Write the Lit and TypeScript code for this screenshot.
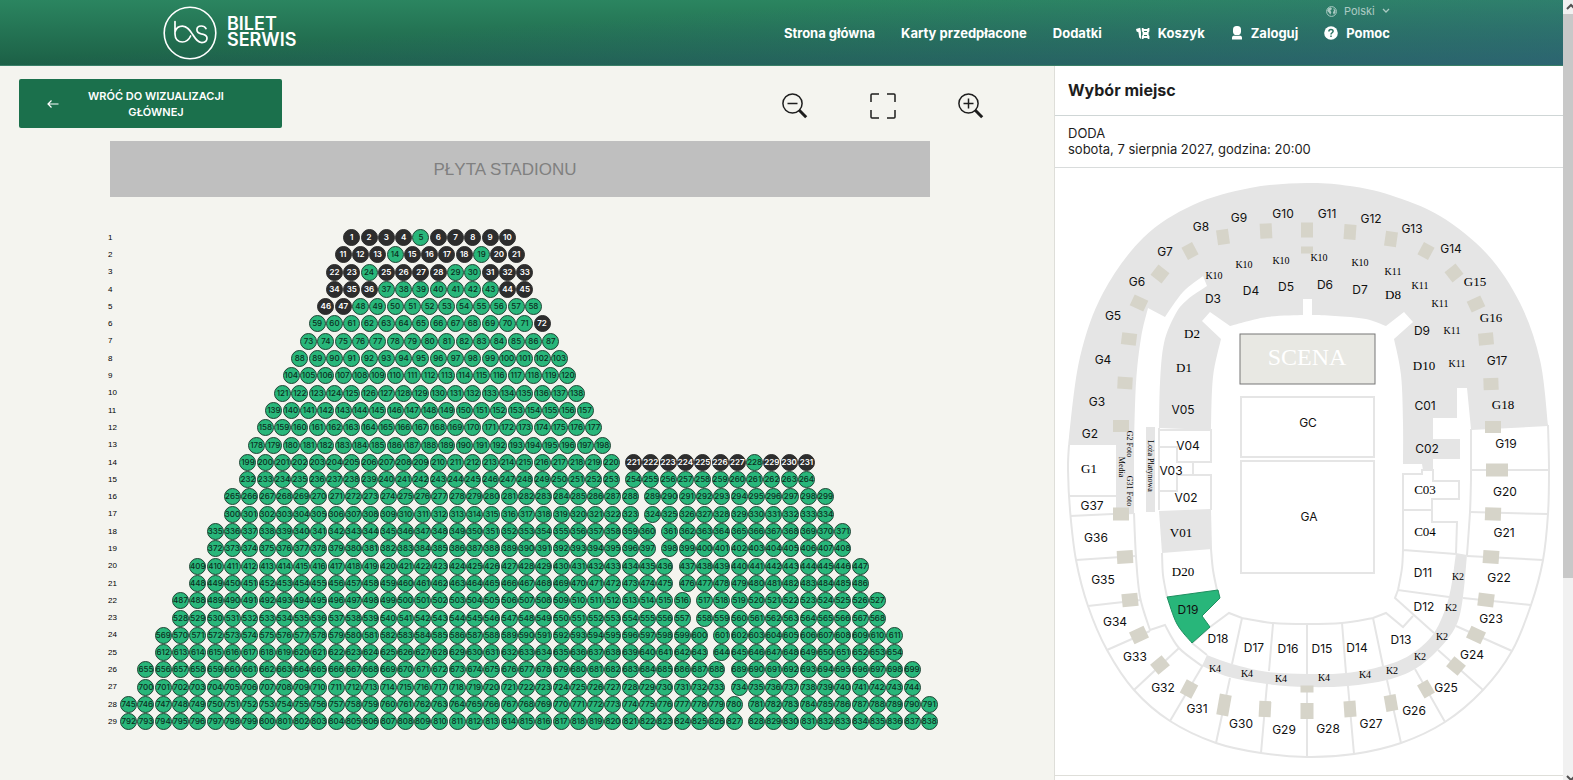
import { LitElement, html, svg, css } from "lit";
import { customElement } from "lit/decorators.js";
import { classMap } from "lit/directives/class-map.js";
import { styleMap } from "lit/directives/style-map.js";

type Point = [number, number];

/* Smooth open curve through the points, as the tail of a path (the pen is already at the first point). */
function curve(points: Point[]): string {
  let d = "";
  for (let i = 0; i < points.length - 1; i++) {
    const p0 = points[Math.max(i - 1, 0)];
    const p1 = points[i];
    const p2 = points[i + 1];
    const p3 = points[Math.min(i + 2, points.length - 1)];
    const c1 = [p1[0] + (p2[0] - p0[0]) / 6, p1[1] + (p2[1] - p0[1]) / 6];
    const c2 = [p2[0] - (p3[0] - p1[0]) / 6, p2[1] - (p3[1] - p1[1]) / 6];
    d += `C${c1[0].toFixed(1)} ${c1[1].toFixed(1)} ${c2[0].toFixed(1)} ${c2[1].toFixed(1)} ${p2[0]} ${p2[1]}`;
  }
  return d;
}
const move = (p: Point) => `M${p[0]} ${p[1]}`;
const line = (points: Point[]) => points.map((p) => `L${p[0]} ${p[1]}`).join("");

/* ---------- seat rows of sector D19 ---------- */

interface Row {
  start: number;
  left: number;
  right: number;
  indent: number;
}

const ROWS: Row[] = [
  { start: 1, left: 10, right: 0, indent: 12.9 },
  { start: 11, left: 11, right: 0, indent: 12.4 },
  { start: 22, left: 12, right: 0, indent: 11.9 },
  { start: 34, left: 12, right: 0, indent: 11.9 },
  { start: 46, left: 13, right: 0, indent: 11.4 },
  { start: 59, left: 14, right: 0, indent: 10.9 },
  { start: 73, left: 15, right: 0, indent: 10.4 },
  { start: 88, left: 16, right: 0, indent: 9.9 },
  { start: 104, left: 17, right: 0, indent: 9.4 },
  { start: 121, left: 18, right: 0, indent: 8.9 },
  { start: 139, left: 19, right: 0, indent: 8.4 },
  { start: 158, left: 20, right: 0, indent: 7.9 },
  { start: 178, left: 21, right: 0, indent: 7.4 },
  { start: 199, left: 22, right: 11, indent: 6.9 },
  { start: 232, left: 22, right: 11, indent: 6.9 },
  { start: 265, left: 24, right: 11, indent: 6 },
  { start: 300, left: 24, right: 11, indent: 6 },
  { start: 335, left: 26, right: 11, indent: 5 },
  { start: 372, left: 26, right: 11, indent: 5 },
  { start: 409, left: 28, right: 11, indent: 4 },
  { start: 448, left: 28, right: 11, indent: 4 },
  { start: 487, left: 30, right: 11, indent: 3 },
  { start: 528, left: 30, right: 11, indent: 3 },
  { start: 569, left: 32, right: 11, indent: 2 },
  { start: 612, left: 32, right: 11, indent: 2 },
  { start: 655, left: 34, right: 11, indent: 1 },
  { start: 700, left: 34, right: 11, indent: 1 },
  { start: 745, left: 36, right: 11, indent: 0 },
  { start: 792, left: 36, right: 11, indent: 0 },
];

const TAKEN = new Set([
  1, 2, 3, 4, 6, 7, 8, 9, 10, 11, 12, 13, 15, 16, 17, 18, 20, 21, 22, 23, 25, 26, 27, 28, 31, 32, 33, 34, 35, 36, 44,
  45, 46, 47, 72, 221, 222, 223, 224, 225, 226, 227, 229, 230, 231,
]);

@customElement("seat-map")
class SeatMap extends LitElement {
  static styles = css`
    :host {
      display: block;
      font-family: "Liberation Sans", Arial, sans-serif;
    }
    .field {
      box-sizing: border-box;
      height: 56px;
      margin: 0 124px 32px 110px;
      padding: 2px 30px 0 0;
      background: #bfbfbf;
      color: #808080;
      font-size: 17px;
      display: flex;
      align-items: center;
      justify-content: center;
    }
    .board {
      margin: 0 116px 0 104px;
      display: grid;
      grid-template-columns: 16px 1fr;
    }
    .rows {
      container-type: inline-size;
    }
    .labels {
      display: grid;
      grid-auto-rows: 1fr;
    }
    .label {
      display: flex;
      align-items: center;
      padding-left: 4px;
      font-size: 8px;
      line-height: 14px;
      color: #000;
    }
    .row {
      --pitch: calc((100cqw - 5px) / 47);
      display: flex;
      height: var(--pitch);
      gap: 5px;
      padding-left: calc(var(--pitch) * var(--indent));
    }
    .group {
      display: grid;
      grid-template-columns: repeat(var(--count), var(--pitch));
    }
    .seat {
      box-sizing: border-box;
      justify-self: center;
      width: 17px;
      height: 17px;
      padding: 0;
      border: 1px solid #1f4434;
      border-radius: 50%;
      background: #28b67a;
      color: #0c2e20;
      font: 500 8px/15px Inter, sans-serif;
      display: flex;
      align-items: center;
      justify-content: center;
      cursor: pointer;
    }
    .seat.taken {
      background: #2d2d2d;
      border-color: #2d2d2d;
      color: #fff;
      font-weight: 600;
      cursor: default;
    }
  `;

  private group(start: number, count: number) {
    if (!count) return "";
    return html`<div class="group" style=${styleMap({ "--count": String(count) })}>
      ${Array.from({ length: count }, (_, i) => start + i).map(
        (n) =>
          html`<button type="button" class=${classMap({ seat: true, taken: TAKEN.has(n) })} ?disabled=${TAKEN.has(n)}>${n}</button>`
      )}
    </div>`;
  }

  render() {
    return html`
      <div class="field">PŁYTA STADIONU</div>
      <div class="board">
        <div class="labels">${ROWS.map((_, i) => html`<span class="label">${i + 1}</span>`)}</div>
        <div class="rows">
          ${ROWS.map(
            (r) => html`<div class="row" style=${styleMap({ "--indent": String(r.indent) })}>
              ${this.group(r.start, r.left)}${this.group(r.start + r.left, r.right)}
            </div>`
          )}
        </div>
      </div>
    `;
  }
}

/* ---------- stadium overview ---------- */

const RIM_TOP: Point[] = [
  [1069, 445], [1069, 437], [1080, 357], [1103, 293], [1143, 238], [1193, 205], [1250, 188], [1307, 183],
  [1350, 186], [1390, 195], [1440, 216], [1487, 254], [1520, 303], [1540, 360], [1548, 425],
];
const RIM_BOTTOM: Point[] = [
  [1069, 445], [1068, 470], [1070, 510], [1076, 560], [1088, 606], [1107, 650], [1134, 690], [1170, 721],
  [1216, 743], [1261, 753], [1307, 757], [1354, 754], [1401, 743], [1445, 722], [1483, 690], [1512, 651],
  [1531, 605], [1543, 560], [1548, 514], [1549, 470], [1548, 425],
];

const CLOSED_AREA =
  move(RIM_TOP[0]) + curve(RIM_TOP) +
  line([[1471, 429], [1467, 388], [1457, 388], [1457, 418], [1433, 418], [1433, 439], [1460, 439], [1460, 459], [1433, 459], [1433, 470], [1423, 470], [1422, 464], [1403, 464]]) +
  curve([[1403, 464], [1403, 423], [1401, 375], [1394, 339]]) +
  line([[1413, 322], [1404, 312], [1386, 326]]) +
  curve([[1386, 326], [1366, 319], [1335, 316], [1312, 315]]) +
  line([[1312, 299], [1303, 299], [1303, 315]]) +
  curve([[1303, 315], [1267, 317], [1230, 326]]) +
  line([[1210, 312], [1202, 321], [1221, 339]]) +
  curve([[1221, 339], [1213, 377], [1211, 430]]) +
  line([[1159, 428]]) +
  curve([[1159, 428], [1160, 383], [1164, 343], [1175, 315], [1187, 300], [1207, 286]]) +
  line([[1203, 276]]) +
  curve([[1203, 276], [1183, 292], [1165, 317]]) +
  line([[1148, 308]]) +
  curve([[1148, 308], [1141, 338], [1136, 383], [1134, 447]]) +
  line([[1134, 513], [1116, 513], [1116, 445]]) + "Z";

const STRIP_INNER: Point[] = [[1207, 655], [1232, 664], [1268, 672], [1307, 674], [1346, 673], [1383, 666], [1410, 655], [1434, 633], [1449, 597], [1456, 553]];
const STRIP_OUTER: Point[] = [[1467, 555], [1463, 597], [1456, 626], [1438, 650], [1415, 669], [1387, 680], [1348, 686], [1307, 687], [1267, 684], [1229, 677], [1202, 666]];
const STRIP = move(STRIP_INNER[0]) + curve(STRIP_INNER) + line([STRIP_OUTER[0]]) + curve(STRIP_OUTER) + "Z";

const OUTLINES = [
  move(RIM_BOTTOM[0]) + curve(RIM_BOTTOM),
  "M1134 513" + curve([[1134, 513], [1136, 557], [1140, 597], [1150, 630]]) + line([[1165, 625]]) + curve([[1165, 625], [1179, 648], [1202, 666]]),
  "M1471 429V480" + curve([[1471, 480], [1470, 512], [1467, 555]]),
  "M1069 496H1116M1070 516L1134 513M1076 560L1136 556M1088 606L1141 600M1107 650L1150 631M1134 690L1179 648M1170 721L1203 665",
  "M1216 743L1230 678M1261 753L1267 684M1307 757V687M1354 754L1348 686M1401 743L1387 680M1445 722L1415 669M1483 690L1438 650",
  "M1512 651L1456 626M1531 605L1463 598M1543 560L1467 556M1548 514L1470 512M1549 470H1471M1548 425L1471 429",
  "M1159 428V510M1159 430H1211V462H1177V447H1159M1177 462H1193V475M1159 491H1177V475H1211V510",
  "M1211 549" + curve([[1211, 549], [1213, 570], [1217, 590]]) + "M1162 553" + curve([[1162, 553], [1163, 575], [1167, 597]]),
  "M1192 643L1210 627L1229 613L1242 618" + curve([[1242, 618], [1273, 623], [1307, 624], [1342, 623], [1373, 618]]) + line([[1386, 613], [1403, 627], [1413, 616]]),
  "M1192 643L1207 655M1242 618L1232 664M1273 624L1269 671M1307 624V674M1342 623L1346 673M1373 618L1383 666",
  "M1434 633L1395 598L1398 590L1449 597M1398 590" + curve([[1398, 590], [1402, 568], [1403, 550]]) + "M1403 550L1456 554M1403 550V474H1422V470H1433V481H1459V499H1432V522H1457L1456 554M1403 510H1432",
];

/* x, y, width, height, rotation of the entrance blocks */
const GATES: number[][] = [
  [1121, 426, 16, 12, 0], [1125, 383, 15, 12, 3], [1129, 339, 15, 12, 7], [1139, 303, 15, 12, 25], [1160, 274, 14, 13, 38],
  [1190, 251, 12, 14, -28], [1223, 237, 12, 15, -8], [1266, 231, 12, 15, -3], [1307, 230, 12, 15, 0], [1307, 250, 12, 7, 0],
  [1350, 232, 12, 15, 4], [1391, 239, 12, 15, 8], [1426, 251, 12, 14, 28], [1454, 273, 14, 13, -38], [1476, 304, 15, 12, -25],
  [1486, 339, 15, 12, -5], [1491, 384, 15, 12, -2], [1493, 427, 16, 12, 0], [1497, 470, 22, 13, 0], [1493, 514, 16, 13, 2],
  [1491, 557, 16, 13, 4], [1486, 600, 16, 13, 7], [1476, 635, 16, 13, 25], [1456, 666, 15, 13, 40], [1426, 689, 12, 15, -30],
  [1391, 703, 12, 16, -10], [1350, 709, 12, 16, -4], [1307, 711, 13, 16, 0], [1307, 689, 13, 7, 0], [1265, 709, 12, 16, 3],
  [1224, 705, 12, 21, 10], [1189, 689, 13, 15, 28], [1160, 665, 15, 13, -40], [1139, 635, 16, 13, -25], [1130, 600, 16, 13, -6],
  [1125, 557, 16, 13, -3], [1121, 514, 16, 13, 0],
];

const SANS: [string, number, number][] = [
  ["G10", 1283, 213], ["G9", 1239, 217], ["G8", 1201, 226], ["G7", 1165, 251], ["G6", 1137, 281], ["G5", 1113, 315],
  ["G4", 1103, 359], ["G3", 1097, 401], ["G2", 1090, 433], ["D5", 1286, 286], ["D4", 1251, 290], ["D3", 1213, 298],
  ["V05", 1183, 409], ["V04", 1188, 445], ["V03", 1171, 470], ["V02", 1186, 497], ["GC", 1308, 422], ["GA", 1309, 516],
  ["G37", 1092, 505], ["G36", 1096, 537], ["G35", 1103, 579], ["G34", 1115, 621], ["G33", 1135, 656], ["G32", 1163, 687],
  ["G31", 1197, 708], ["G30", 1241, 723], ["G29", 1284, 729], ["D18", 1218, 638], ["D17", 1254, 647], ["D16", 1288, 648],
  ["G11", 1327, 213], ["G12", 1371, 218], ["G13", 1412, 228], ["G14", 1451, 248], ["G17", 1497, 360], ["G19", 1506, 443],
  ["D6", 1325, 284], ["D7", 1360, 289], ["D9", 1422, 330], ["C01", 1425, 405], ["C02", 1427, 448], ["G20", 1505, 491],
  ["G21", 1504, 532], ["G22", 1499, 577], ["G23", 1491, 618], ["G24", 1472, 654], ["G25", 1446, 687], ["G26", 1414, 710],
  ["G27", 1371, 723], ["G28", 1328, 728], ["D11", 1423, 572], ["D12", 1424, 606], ["D13", 1401, 639], ["D14", 1357, 647],
  ["D15", 1322, 648], ["D19", 1188, 609],
];
const SERIF: [string, number, number][] = [
  ["G1", 1089, 468], ["D2", 1192, 333], ["D1", 1184, 367], ["V01", 1181, 532], ["D20", 1183, 571], ["G15", 1475, 281],
  ["G16", 1491, 317], ["G18", 1503, 404], ["D8", 1393, 294], ["D10", 1424, 365], ["C03", 1425, 489], ["C04", 1425, 531],
];
const SMALL: [string, number, number][] = [
  ["K10", 1214, 275], ["K10", 1244, 264], ["K10", 1281, 260], ["K10", 1319, 257], ["K10", 1360, 262], ["K11", 1393, 271],
  ["K11", 1420, 285], ["K11", 1440, 303], ["K11", 1452, 330], ["K11", 1457, 363], ["K4", 1215, 668], ["K4", 1247, 673],
  ["K4", 1281, 678], ["K4", 1324, 677], ["K4", 1365, 674], ["K2", 1392, 670], ["K2", 1420, 656], ["K2", 1442, 636],
  ["K2", 1451, 607], ["K2", 1458, 576],
];
const SIDEWAYS: [string, number, number][] = [
  ["G2 Foto", 1129, 444], ["Media", 1121, 467], ["G31 Foto", 1129, 491], ["Loża Platynowa", 1150, 466],
];

@customElement("stadium-plan")
class StadiumPlan extends LitElement {
  static styles = css`
    :host {
      display: block;
    }
    svg {
      display: block;
      width: 100%;
      height: auto;
    }
    .closed {
      fill: #e5e5e5;
    }
    .outline {
      fill: none;
      stroke: #e5e5e5;
      stroke-width: 2;
    }
    .gate {
      fill: #d6d4c9;
    }
    .chosen {
      fill: #28b67a;
      stroke: #1f8f60;
    }
    .stage {
      fill: #e8e8e3;
      stroke: #777;
    }
    text {
      text-anchor: middle;
      dominant-baseline: central;
      fill: #111;
    }
    .sans {
      font: 12px Inter, sans-serif;
    }
    .serif {
      font: 13px "Liberation Serif", serif;
      fill: #000;
    }
    .small {
      font: 10px "Liberation Serif", serif;
      fill: #000;
    }
    .sideways {
      font: 8px "Liberation Serif", serif;
      fill: #000;
    }
    .scene {
      font: 24px "Liberation Serif", serif;
      fill: #fff;
    }
  `;

  render() {
    const put = (kind: string) => ([t, x, y]: [string, number, number]) => svg`<text class=${kind} x=${x} y=${y}>${t}</text>`;
    return html`<svg viewBox="1055 168 508 607" role="img" aria-label="Stadion">
      <path class="closed" d=${CLOSED_AREA}></path>
      <path class="closed" d=${STRIP}></path>
      <path class="closed" d="M1146 427H1155V512H1146Z"></path>
      <path class="closed" d="M1159 511L1211 509L1212 549L1162 553Z"></path>
      ${OUTLINES.map((d) => svg`<path class="outline" d=${d}></path>`)}
      <rect class="outline" x="1241" y="397" width="133" height="60"></rect>
      <rect class="outline" x="1241" y="461" width="133" height="112"></rect>
      <rect class="stage" x="1240" y="334" width="135" height="50"></rect>
      <path class="chosen" d=${"M1167 597L1218 590L1220 598L1202 616L1210 627L1192 643" + curve([[1192, 643], [1177, 624], [1167, 597]]) + "Z"}></path>
      ${GATES.map(([x, y, w, h, r]) => svg`<rect class="gate" x=${x - w / 2} y=${y - h / 2} width=${w} height=${h} transform="rotate(${r} ${x} ${y})"></rect>`)}
      ${SANS.map(put("sans"))} ${SERIF.map(put("serif"))} ${SMALL.map(put("small"))}
      ${SIDEWAYS.map(([t, x, y]) => svg`<text class="sideways" x=${x} y=${y} transform="rotate(90 ${x} ${y})">${t}</text>`)}
      <text class="scene" x="1307" y="357">SCENA</text>
    </svg>`;
  }
}

/* ---------- page ---------- */

@customElement("app-root")
class AppRoot extends LitElement {
  static styles = css`
    :host {
      display: grid;
      grid-template-columns: minmax(0, 1fr) 10px;
      min-height: 100vh;
      color: #1d1d1d;
      font-family: Inter, sans-serif;
    }
    .page {
      display: flex;
      flex-direction: column;
    }
    header {
      box-sizing: border-box;
      height: 66px;
      padding: 5px 173px 0 163px;
      display: flex;
      justify-content: space-between;
      border-bottom: 1px solid #3a8068;
      background:
        linear-gradient(176deg, rgba(62, 106, 160, 0) 35%, rgba(62, 106, 160, 0.48) 100%),
        linear-gradient(#2b8560, #1c6046);
      color: #fff;
    }
    .brand {
      display: flex;
      align-items: flex-start;
      gap: 10px;
      padding-top: 1px;
      color: inherit;
      text-decoration: none;
      font-size: 18px;
      line-height: 16px;
      font-weight: 600;
    }
    .name {
      display: grid;
      padding-top: 10px;
    }
    .menu {
      display: flex;
      flex-direction: column;
      align-items: flex-end;
    }
    .lang {
      display: flex;
      align-items: center;
      height: 12px;
      gap: 7px;
      opacity: 0.6;
    }
    .lang select {
      appearance: none;
      border: 0;
      padding: 0;
      background: none;
      color: #fff;
      font: 11px/12px Inter, sans-serif;
    }
    nav {
      display: flex;
      gap: 26px;
      padding-top: 7px;
      font-size: 13px;
      line-height: 18px;
      font-weight: 700;
    }
    nav a {
      display: flex;
      align-items: center;
      gap: 8px;
      color: inherit;
      text-decoration: none;
    }
    nav .first {
      margin-left: 8px;
    }
    .content {
      flex: 1;
      display: grid;
      grid-template-columns: minmax(0, 1054fr) minmax(0, 509fr);
    }
    main {
      background: #f4f4ef;
    }
    .toolbar {
      display: flex;
      justify-content: space-between;
      padding: 13px 69px 13px 19px;
    }
    .back {
      box-sizing: border-box;
      width: 263px;
      min-height: 49px;
      padding: 0 46px 0 28px;
      border: 0;
      border-radius: 2px;
      background: #1b704c;
      color: #fff;
      font: 600 11px/16px Inter, sans-serif;
      display: flex;
      align-items: center;
      justify-content: space-between;
      cursor: pointer;
    }
    .back span {
      width: 160px;
    }
    .tools {
      display: flex;
      align-items: center;
      gap: 60px;
      padding-top: 4px;
    }
    .tools button {
      padding: 0;
      border: 0;
      background: none;
      line-height: 0;
      cursor: pointer;
    }
    aside {
      border-left: 1px solid #deded9;
      background: #fff;
    }
    h1 {
      margin: 0;
      padding: 14px 13px 15px;
      border-bottom: 1px solid #cfd6d6;
      font-size: 16px;
      line-height: 20px;
      font-weight: 700;
    }
    .event {
      padding: 9px 13px 10px;
      border-bottom: 1px solid #d9dcdc;
      font-size: 13px;
      line-height: 16px;
    }
    .plan {
      border-bottom: 1px solid #deded9;
    }
    .scroll {
      display: flex;
      flex-direction: column;
      background: #f1f1f1;
      overflow: hidden;
    }
    .thumb {
      flex: 3;
      background: #c8c8c8;
    }
    .end {
      height: 14px;
      flex: none;
    }
    .rest {
      flex: 1;
    }
    svg {
      display: block;
      flex: none;
    }
  `;

  private lens(label: string, plus: boolean) {
    return html`<button type="button" aria-label=${label}>
      <svg width="28" height="28" viewBox="0 0 28 28" fill="none" stroke="#1d1d1d" stroke-width="1.500">
        <circle cx="11.500" cy="11.500" r="9.600"></circle>
        <path d=${plus ? "M6.500 11.500H16.500M11.500 6.500V16.500" : "M6.500 11.500H16.500"}></path>
        <path d="M18 18L25.200 25.200" stroke-width="3"></path>
      </svg>
    </button>`;
  }

  render() {
    return html`
      <div class="page">
        <header>
          <a class="brand" href="#">
            <svg width="54" height="54" viewBox="0 0 54 54" fill="none" stroke="#fff" stroke-linecap="round">
              <circle cx="27" cy="27" r="25.800" stroke-width="1.600"></circle>
              <path
                stroke-width="1.700"
                d="M12 15.500V28C12 32.800 15 36 19.400 36C23.500 36 26 33.600 27.600 30M12 26C13 22.400 15.900 20.200 19.400 20.200C24.500 20.200 27 24.500 29.500 28.300C32.300 32.500 34.500 36.600 38.800 36.600C42 36.600 44 34.700 44 32C44 28.800 41 28.200 38.300 27.800C35.600 27.300 33.900 26.200 33.900 23.800C33.900 21.400 35.800 20 38.300 20C40.600 20 42.200 21 43 22.600"
              ></path>
            </svg>
            <span class="name"><span>BILET</span><span>SERWIS</span></span>
          </a>
          <div class="menu">
            <label class="lang">
              <svg width="11" height="11" viewBox="0 0 11 11">
                <circle cx="5.500" cy="5.500" r="4.900" fill="none" stroke="#fff"></circle>
                <path fill="#fff" d="M2 2.500L5 1.200L6 3L4.300 4.500L5.400 6.300L4.300 8.800L2.800 6.600L1.200 5ZM7 2.200L9.500 4L9.400 6.800L7.800 8.600L6.900 6.400L8 4.600Z"></path>
              </svg>
              <select aria-label="Język"><option>Polski</option></select>
              <svg width="8" height="6" viewBox="0 0 8 6" fill="none" stroke="#fff" stroke-width="1.300"><path d="M1 1L4 4L7 1"></path></svg>
            </label>
            <nav>
              <a href="#">Strona główna</a>
              <a href="#">Karty przedpłacone</a>
              <a href="#">Dodatki</a>
              <a href="#" class="first">
                <svg width="14" height="13" viewBox="0 0 14 13" fill="#fff">
                  <path d="M0 2L4.200 0.800L5 5V12L3.200 10.500L2.400 5.200L0.600 4.600ZM5.800 1H7.600V2H11.600V1H13.400V4.200L12.600 5.200V8L13.400 9V12H11.600V11H7.600V12H5.800V9L6.600 8V5.200L5.800 4.200Z"></path>
                  <path fill="#2b7862" d="M8 4H11V5H8ZM8 8H11V9H8Z"></path>
                </svg>
                Koszyk</a
              >
              <a href="#">
                <svg width="12" height="14" viewBox="0 0 12 14" fill="#fff">
                  <rect x="2" y="0" width="8" height="9" rx="3.600"></rect>
                  <path d="M1 13.500V11.500C1 10.300 2 9.700 3.200 9.700H8.800C10 9.700 11 10.300 11 11.500V13.500Z"></path>
                </svg>
                Zaloguj</a
              >
              <a href="#">
                <svg width="14" height="14" viewBox="0 0 14 14">
                  <circle cx="7" cy="7" r="6.800" fill="#fff"></circle>
                  <path fill="none" stroke="#2b7364" stroke-width="1.500" d="M4.900 5.400C4.900 2.800 9.100 2.800 9.100 5.300C9.100 6.800 7 6.700 7 8.500M7 9.500V11"></path>
                </svg>
                Pomoc</a
              >
            </nav>
          </div>
        </header>
        <div class="content">
          <main>
            <div class="toolbar">
              <button type="button" class="back">
                <svg width="12" height="10" viewBox="0 0 12 10" fill="none" stroke="#fff" stroke-width="1.200"><path d="M11.500 5H1M4.500 1.500L1 5L4.500 8.500"></path></svg>
                <span>WRÓĆ DO WIZUALIZACJI GŁÓWNEJ</span>
              </button>
              <div class="tools">
                ${this.lens("Pomniejsz", false)}
                <button type="button" aria-label="Dopasuj">
                  <svg width="28" height="28" viewBox="0 0 28 28" fill="none" stroke="#1d1d1d" stroke-width="1.500">
                    <path d="M2 10V3Q2 2 3 2H10M18 2H25Q26 2 26 3V10M26 18V25Q26 26 25 26H18M10 26H3Q2 26 2 25V18"></path>
                  </svg>
                </button>
                ${this.lens("Powiększ", true)}
              </div>
            </div>
            <seat-map></seat-map>
          </main>
          <aside>
            <h1>Wybór miejsc</h1>
            <div class="event">DODA<br />sobota, 7 sierpnia 2027, godzina: 20:00</div>
            <stadium-plan class="plan"></stadium-plan>
          </aside>
        </div>
      </div>
      <div class="scroll">
        <svg class="end" width="17" height="14" viewBox="0 0 17 14" fill="none" stroke="#505050" stroke-width="2"><path d="M4 9L8 5L12 9"></path></svg>
        <div class="thumb"></div>
        <div class="rest"></div>
        <svg class="end" width="17" height="14" viewBox="0 0 17 14" fill="none" stroke="#505050" stroke-width="2"><path d="M4 10L8 14L12 10"></path></svg>
      </div>
    `;
  }
}
